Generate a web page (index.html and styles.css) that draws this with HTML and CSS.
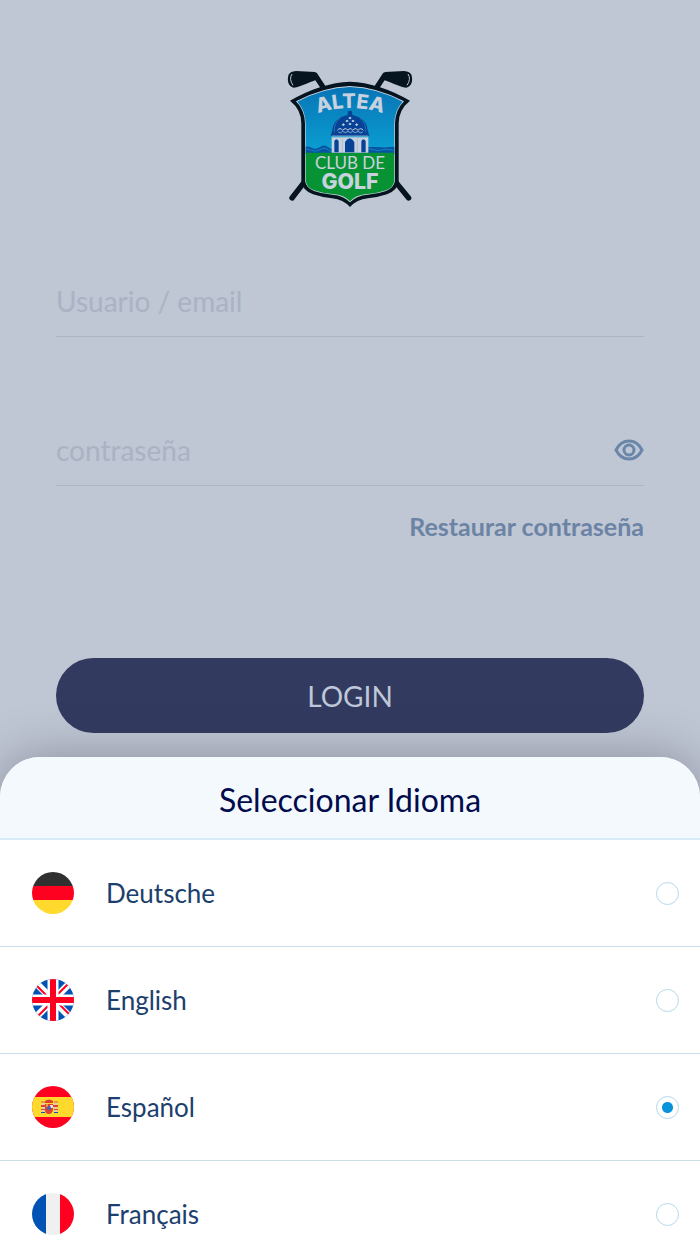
FILE: index.html
```html
<!DOCTYPE html>
<html lang="es">
<head>
<meta charset="utf-8">
<meta name="viewport" content="width=device-width, initial-scale=1">
<title>Altea Club de Golf</title>
<link rel="stylesheet" href="styles.css">
</head>
<body>
<div class="app">
  <main class="login">
    <svg class="logo" viewBox="0 0 420 465" role="img" aria-label="Altea Club de Golf">
      <defs>
        <linearGradient id="sky" x1="0" y1="0" x2="0" y2="1">
          <stop offset="0" stop-color="#0872b5"/>
          <stop offset="1" stop-color="#0aa0d2"/>
        </linearGradient>
        <clipPath id="shield"><path d="M52 125Q130 84 210 81Q290 84 368 125Q344 150 343 190V362Q340 382 318 391Q293 400 262 402Q226 404 210 424Q194 404 158 402Q127 400 102 391Q80 382 77 362V190Q76 150 52 125Z"/></clipPath>
        <path id="arc" d="M90 169Q210 119 332 169"/>
      </defs>
      <g stroke="#061420" stroke-width="16" stroke-linecap="round">
        <path d="M106 46L132 86M314 46L288 86M74 365L36 414M346 365L386 414"/>
      </g>
      <path d="M105 36L120 57C94 62 64 81 41 83C25 79 21 62 25 47C27 38 37 34 48 33Z" fill="#061420"/>
      <path d="M315 36L300 57C326 62 356 81 379 83C395 79 399 62 395 47C393 38 383 34 372 33Z" fill="#061420"/>
      <path d="M36 42Q26 57 39 76M384 42Q394 57 381 76" fill="none" stroke="#b9c3d0" stroke-width="3"/>
      <path d="M30 122Q124 68 210 65Q296 68 390 122Q356 149 356 190V365Q352 391 321 403Q294 412 264 415Q230 419 210 441Q190 419 156 415Q126 412 99 403Q68 391 64 365V190Q64 149 30 122Z" fill="#061420"/>
      <path d="M48 124Q129 81 210 78Q291 81 372 124Q346 150 345 190V363Q341 384 318 393Q294 402 263 404Q228 407 210 427Q192 407 157 404Q126 402 102 393Q79 384 75 363V190Q74 150 48 124Z" fill="#c8d2df"/>
      <g clip-path="url(#shield)">
        <path d="M40 70H380V282H40Z" fill="url(#sky)"/>
        <path d="M70 262Q84 256 95 263T120 261T145 262T165 261H255T280 261T305 262T330 261T350 262V282H70Z" fill="#0755a0"/>
        <path d="M70 270Q84 264 95 271T120 269T145 270T165 269M255 269Q268 264 280 269T305 270T330 269T350 270" fill="none" stroke="#1683c0" stroke-width="3"/>
        <path d="M40 278H380V440H40Z" fill="#079333"/>
      </g>
      <path d="M155 232H265V278H155Z" fill="#c8d2df"/>
      <path d="M152 228Q155 217 157 210Q161 174 203 165L205 154H215L217 165Q259 174 263 210Q265 217 268 228Z" fill="#064296"/>
      <circle cx="210" cy="159" r="7" fill="#064296"/>
      <path d="M155 228H265" stroke="#c8d2df" stroke-width="2"/>
      <path d="M181 174Q160 190 163 217M239 174Q260 190 257 217" fill="none" stroke="#3d7bb6" stroke-width="2"/>
      <g fill="none" stroke="#c8d2df" stroke-width="3">
        <path d="M172 211Q180 201 188 211Q196 201 204 211Q210 201 218 211Q226 201 234 211Q242 201 250 211"/>
        <path d="M175 216Q182 222 188 214Q196 222 204 214Q211 222 218 214Q226 222 234 214Q242 222 248 216" stroke-width="2"/>
      </g>
      <path d="M210 170l5 4-5 4-5-4zM201 179l5 4-5 4-5-4zM219 179l5 4-5 4-5-4zM210 188l5 4-5 4-5-4zM190 190l5 4-5 4-5-4zM230 190l5 4-5 4-5-4z" fill="#c8d2df"/>
      <path d="M163 277V243Q169 233 176 243V277ZM195 277V246Q209 224 223 246V277ZM244 277V243Q250 233 257 243V277Z" fill="#064296"/>
      <path d="M187 277V237M232 277V237" stroke="#9fb4cd" stroke-width="2"/>
      <text class="logo-altea"><textPath href="#arc" startOffset="50%">ALTEA</textPath></text>
      <text class="logo-club" x="210" y="326">CLUB DE</text>
      <text class="logo-golf" x="210" y="387">GOLF</text>
    </svg>
    <form class="form">
      <label class="field">
        <input class="input" type="text" placeholder="Usuario / email" aria-label="Usuario / email">
      </label>
      <div class="field">
        <input class="input" type="password" placeholder="contraseña" aria-label="contraseña">
        <button class="reveal" type="button" aria-label="Mostrar contraseña">
          <svg class="eye" viewBox="0 0 30 22" fill="none" stroke="#6a86a8" stroke-width="3"><path d="M2 11C8 -1 22 -1 28 11C22 23 8 23 2 11Z"/><ellipse cx="15" cy="11" rx="5" ry="5"/></svg>
        </button>
      </div>
      <a class="restore" href="#">Restaurar contraseña</a>
      <button class="submit" type="button">LOGIN</button>
    </form>
  </main>
  <section class="sheet" aria-labelledby="sheet-title">
    <h2 class="sheet-title" id="sheet-title">Seleccionar Idioma</h2>
    <div class="languages">
      <label class="language">
        <svg class="flag" viewBox="0 0 42 42" aria-hidden="true">
          <defs><clipPath id="round"><circle cx="21" cy="21" r="21"/></clipPath></defs>
          <g clip-path="url(#round)"><path fill="#303030" d="M0 0H42V14H0Z"/><path fill="#fe0020" d="M0 14H42V28H0Z"/><path fill="#ffda2c" d="M0 28H42V42H0Z"/></g>
        </svg>
        <span class="name">Deutsche</span>
        <input class="radio" type="radio" name="language">
      </label>
      <label class="language">
        <svg class="flag" viewBox="0 0 42 42" aria-hidden="true">
          <g clip-path="url(#round)">
            <path fill="#0052b4" d="M0 0H42V42H0Z"/>
            <path stroke="#fff" stroke-width="7" d="M0 0L42 42M42 0L0 42"/>
            <path stroke="#fe0020" stroke-width="2" d="M4 6L18 20M37 4L23 18M24 22L38 36M19 24L5 38"/>
            <path stroke="#fff" stroke-width="11" d="M21 0V42M0 21H42"/>
            <path stroke="#fe0020" stroke-width="6" d="M21 0V42M0 21H42"/>
          </g>
        </svg>
        <span class="name">English</span>
        <input class="radio" type="radio" name="language">
      </label>
      <label class="language">
        <svg class="flag" viewBox="0 0 42 42" aria-hidden="true">
          <g clip-path="url(#round)"><path fill="#fe0020" d="M0 0H42V42H0Z"/><path fill="#ffda2c" d="M0 11H42V31H0Z"/></g>
          <path fill="#d9cfc0" d="M10 17h3v9h-3zM22 17h3v9h-3z"/>
          <path fill="#e0402f" d="M9 19h5v2H9zM21 19h5v2h-5zM9 23h4v1H9zM22 23h4v1h-4zM13 15Q17 12 21 15V17H13ZM13 18H21V24Q20 28 17 28Q13 28 13 24Z"/>
          <path fill="#ef9a36" d="M9 15h4v2H9zM22 15h4v2h-4zM14 18h2v3h-2z"/>
          <path fill="#f3d9de" d="M18 19h3v3h-3z"/>
          <path fill="#174ea6" d="M9 26h4v1H9zM22 26h4v1h-4z"/>
          <circle cx="17" cy="22" r="2" fill="#3567bd"/>
        </svg>
        <span class="name">Español</span>
        <input class="radio" type="radio" name="language" checked>
      </label>
      <label class="language">
        <svg class="flag" viewBox="0 0 42 42" aria-hidden="true">
          <g clip-path="url(#round)"><path fill="#0052b4" d="M0 0H14V42H0Z"/><path fill="#f0f0f0" d="M14 0H28V42H14Z"/><path fill="#fe0020" d="M28 0H42V42H28Z"/></g>
        </svg>
        <span class="name">Français</span>
        <input class="radio" type="radio" name="language">
      </label>
    </div>
  </section>
</div>
</body>
</html>
```
FILE: styles.css
```css
* { box-sizing: border-box; }
body {
  margin: 0;
  font-family: Lato, sans-serif;
  background: #bfc6d4;
}
button, input { font: inherit; }
body, button, input { text-rendering: optimizeLegibility; }

.app {
  display: flex;
  flex-direction: column;
  height: 100vh;
  overflow: hidden;
}

.login {
  flex: none;
  display: flex;
  flex-direction: column;
  align-items: center;
  padding: 60px 8% 24px;
}
.logo { width: 140px; height: 155px; }
.logo text { fill: #c8d2df; text-anchor: middle; }
.logo-altea { font-family: Inter, sans-serif; font-size: 60px; font-weight: 800; }
.logo-club { font-size: 51px; }
.logo-golf { font-family: Inter, sans-serif; font-size: 64px; font-weight: 800; }

.form {
  align-self: stretch;
  display: flex;
  flex-direction: column;
  margin-top: 50px;
}
.field {
  display: flex;
  align-items: center;
  height: 72px;
  border-bottom: 1px solid #abb4c3;
}
.field + .field { margin-top: 77px; }
.input {
  flex: 1;
  min-width: 0;
  height: 100%;
  padding: 0;
  border: 0;
  outline: 0;
  background: transparent;
  color: #304a70;
  font-size: 28px;
}
.input::placeholder { color: #a9b3c4; opacity: 1; }
.reveal {
  display: flex;
  padding: 0;
  border: 0;
  background: none;
}
.eye { width: 30px; height: 22px; }
.restore {
  align-self: flex-end;
  margin-top: 25px;
  color: #6b83a4;
  font-size: 25px;
  font-weight: 700;
  line-height: 30px;
  text-decoration: none;
}
.submit {
  height: 75px;
  margin-top: 117px;
  border: 0;
  border-radius: 38px;
  background: #323a60;
  color: #bfc8d8;
  font-size: 28px;
}

.sheet {
  flex: 1;
  min-height: 0;
  display: flex;
  flex-direction: column;
  overflow: hidden;
  border-radius: 40px 40px 0 0;
  background: #fff;
  box-shadow: 0 0 50px rgba(60, 60, 70, 0.4);
}
.sheet-title {
  flex: none;
  margin: 0;
  padding: 22px 16px 17px;
  border-bottom: 2px solid #d8ebf8;
  background: #f4f9fe;
  color: #020c4c;
  font-size: 32px;
  font-weight: 400;
  line-height: 42px;
  text-align: center;
}
.languages {
  flex: 1;
  min-height: 0;
  overflow-y: auto;
  scrollbar-width: none;
}
.language {
  display: flex;
  align-items: center;
  gap: 32px;
  height: 107px;
  padding: 0 21px 0 32px;
  border-bottom: 1px solid #cbdfe9;
  color: #1c406d;
  font-size: 26px;
}
.flag { flex: none; width: 42px; height: 42px; }
.name { flex: 1; }
.radio {
  appearance: none;
  flex: none;
  width: 23px;
  height: 23px;
  margin: 0;
  border: 1px solid #b5d9ea;
  border-radius: 50%;
}
.radio:checked { background: radial-gradient(circle, #0693dc 5px, #fff 6px); }
```
